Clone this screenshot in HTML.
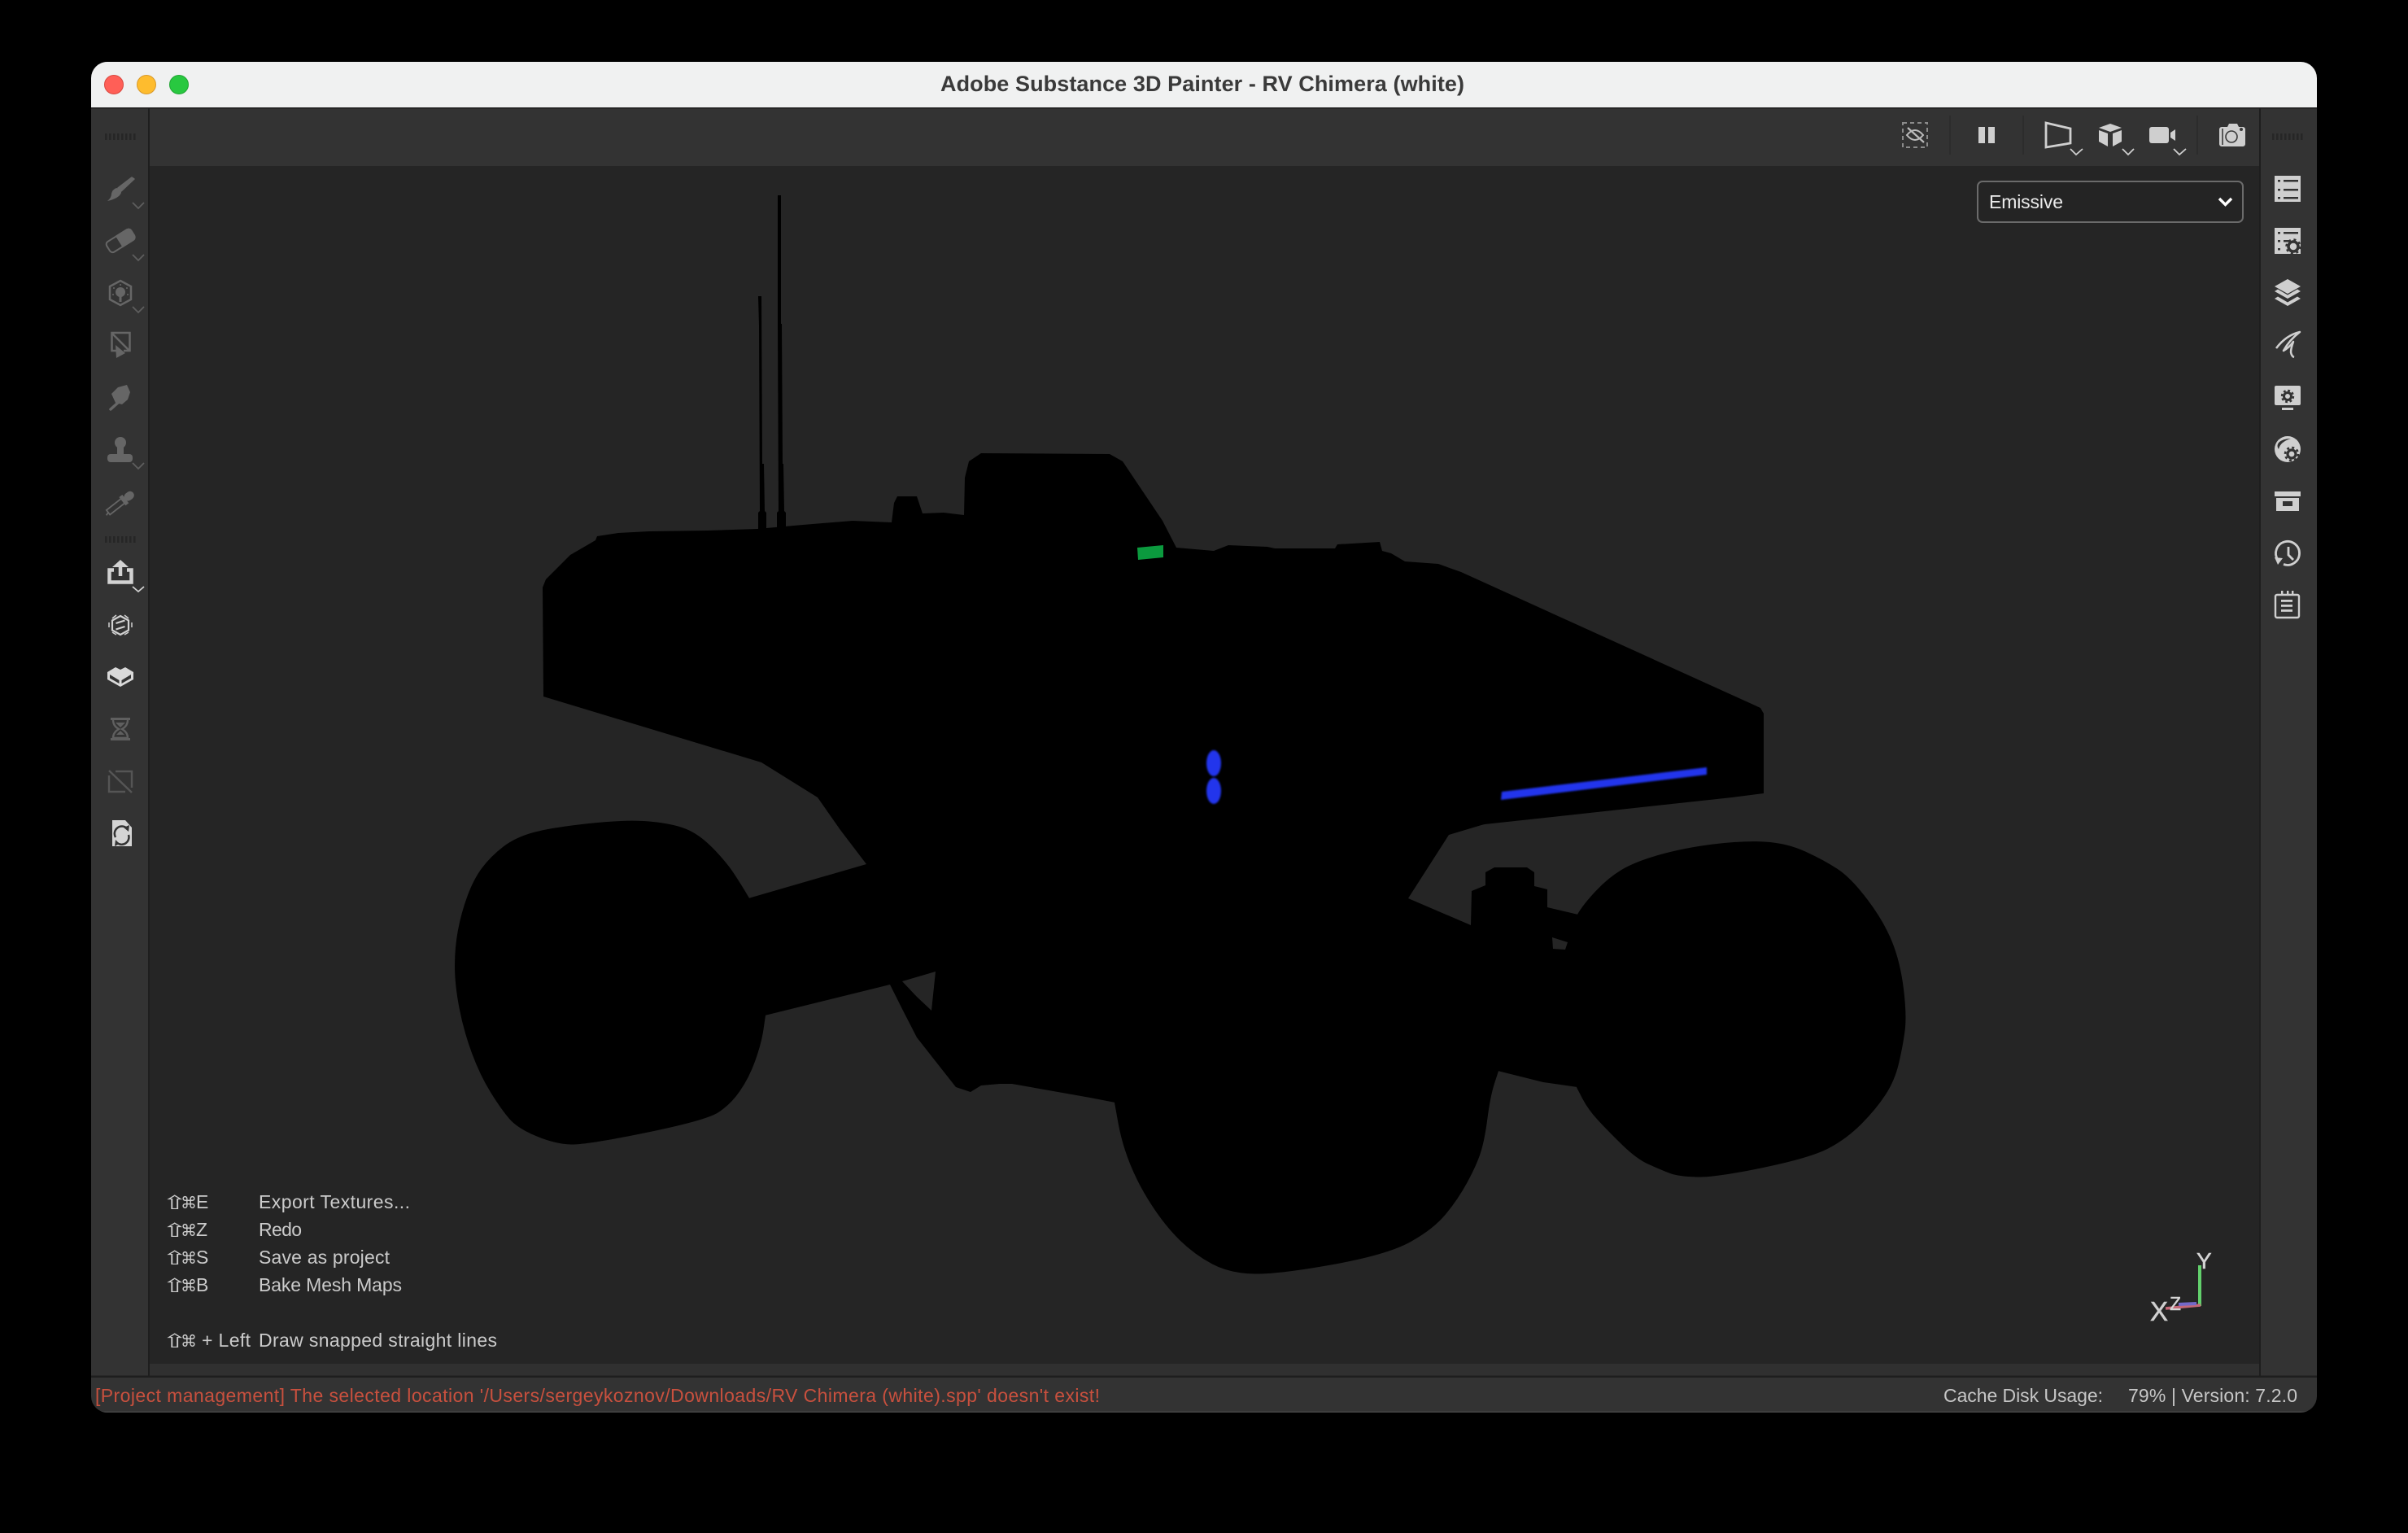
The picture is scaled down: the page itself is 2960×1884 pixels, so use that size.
<!DOCTYPE html>
<html lang="en"><head><meta charset="utf-8"><title>Adobe Substance 3D Painter - RV Chimera (white)</title>
<style>
html,body{margin:0;padding:0;width:2960px;height:1884px;background:#000;overflow:hidden}
svg{display:block;position:absolute;left:0;top:0}
text{font-family:"Liberation Sans","DejaVu Sans",sans-serif}
</style></head><body>
<svg width="2960" height="1884" viewBox="0 0 2960 1884" xmlns="http://www.w3.org/2000/svg">
<defs>
<clipPath id="win"><path d="M132 76H2828A20 20 0 0 1 2848 96V1716A20 20 0 0 1 2828 1736H132A20 20 0 0 1 112 1716V96A20 20 0 0 1 132 76Z"/></clipPath>
<filter id="soft" x="-20%" y="-60%" width="140%" height="220%"><feGaussianBlur stdDeviation="1.1"/></filter>
</defs>
<rect width="2960" height="1884" fill="#000"/>
<g clip-path="url(#win)">
<rect x="112" y="76" width="2736" height="1660" fill="#333"/>
<rect x="112" y="76" width="2736" height="56" fill="#f0f1f1"/>
<rect x="112" y="132" width="2736" height="1.500" fill="#1c1c1c"/>
<rect x="184" y="204" width="2593" height="1472" fill="#252525"/>
<rect x="184" y="1676" width="2593" height="15" fill="#303030"/>
<rect x="182" y="133" width="2" height="1558" fill="#1e1e1e"/>
<rect x="2777" y="133" width="2" height="1558" fill="#1e1e1e"/>
<rect x="112" y="1690.500" width="2736" height="2.500" fill="#1e1e1e"/>
<rect x="112" y="1734.500" width="2736" height="1.500" fill="#454545"/>
</g>
<circle cx="140" cy="104" r="11.5" fill="#ff5f57" stroke="#d9473f" stroke-width="1"/>
<circle cx="180" cy="104" r="11.5" fill="#febc2e" stroke="#d8992a" stroke-width="1"/>
<circle cx="220" cy="104" r="11.5" fill="#28c840" stroke="#21a534" stroke-width="1"/>
<text x="1156" y="112" font-size="27" font-weight="700" fill="#3a3a3a" textLength="644" lengthAdjust="spacing">Adobe Substance 3D Painter - RV Chimera (white)</text>

<!-- Vehicle silhouette -->
<path fill="#000" d="M667 722L671 712L701 682L732 664L734 659L760 655L798 653L870 652L931 650L987 645L1048 640L1096 642L1099 618L1103 610L1127 610L1134 631L1160 630L1185 633L1186 587L1191 567L1206 557L1364 558L1380 567L1429 640L1446 673L1492 677L1510 670L1558 672L1567 674L1641 674L1644 669L1696 666L1699 677L1710 680L1727 690L1768 693L1796 703L2164 870L2168 877L2168 975L2129 980L1825 1013L1821 1014L1781 1026L1731 1104L1808 1137L1809 1095L1826 1088L1826 1072L1837 1066L1877 1066L1886 1072L1886 1089L1902 1093L1902 1115L1940 1124L1939 1336L1897 1330L1841 1316L1371 1355L1340 1349L1244 1332L1229 1332L1206 1334L1193 1342L1175 1336L1127 1275L1109 1240L1094 1210L940 1248L920 1104L1065 1062L1033 1020L1005 980L936 937L668 856Z"/>
<g fill="#000" stroke="#000" stroke-width="2" stroke-linejoin="round">
<path d="M920 1104Q910 1087 901 1073.500Q892 1060 875.500 1043Q859 1026 842.500 1019.500Q826 1013 798 1010.500Q770 1008 724 1013Q678 1018 656 1024Q634 1030 619 1041.500Q604 1053 593.500 1067Q583 1081 575.500 1101.500Q568 1122 564 1143Q560 1164 560 1187Q560 1210 565.500 1238.500Q571 1267 581 1294Q591 1321 604 1342Q617 1363 627 1374.500Q637 1386 660 1395.500Q683 1405 702 1405.500Q721 1406 794 1391Q867 1376 882 1366.500Q897 1357 908.500 1340.500Q920 1324 927.500 1303Q935 1282 937.500 1265L940 1248Z"/>
<path d="M1940 1124Q1947 1112 1962 1096Q1977 1080 1993.500 1070Q2010 1060 2040 1051.500Q2070 1043 2106 1038.500Q2142 1034 2169 1035.500Q2196 1037 2219 1047.500Q2242 1058 2258.500 1069Q2275 1080 2295 1106.500Q2315 1133 2325 1158Q2335 1183 2339 1215.500Q2343 1248 2340.500 1267Q2338 1286 2333 1307Q2328 1328 2316.500 1345.500Q2305 1363 2287 1381Q2269 1399 2247 1410.500Q2225 1422 2167 1434Q2109 1446 2086 1445.500Q2063 1445 2053 1441Q2043 1437 2028 1430.500Q2013 1424 1995 1406.500Q1977 1389 1965 1376Q1953 1363 1946 1349.500L1939 1336Z"/>
<path d="M1841 1316L1836 1331.500Q1831 1347 1827.500 1374Q1824 1401 1819 1416.500Q1814 1432 1802.500 1453Q1791 1474 1776 1492Q1761 1510 1733 1525.500Q1705 1541 1638.500 1553Q1572 1565 1542 1564.500Q1512 1564 1490.500 1552.500Q1469 1541 1451 1523.500Q1433 1506 1416.500 1480.500Q1400 1455 1390 1430Q1380 1405 1375.500 1380L1371 1355Z"/>
</g>
<path fill="#252525" d="M1109 1206L1150 1194L1145 1242L1127 1225Z"/>
<path fill="#252525" d="M1908 1152L1927 1158L1924 1167L1909 1166Z"/>
<path fill="#000" d="M956 240H960V398H961L962 570H963L964 628L966 630V652H955V630L957 628L956 400Z"/>
<path fill="#000" d="M932 364H936L937 570H939L940 628L942 630V652H932V630L934 628L933 400Z"/>
<path fill="#0b9a3e" d="M1398 673L1430 670L1430 685L1399 688Z"/>
<g fill="#2236ec" filter="url(#soft)">
<ellipse cx="1492" cy="938" rx="9" ry="16"/>
<ellipse cx="1492" cy="972" rx="9" ry="16"/>
<path d="M1846 973L2098 943L2098 952L1845 983Z"/>
</g>

<!-- Handles -->
<g stroke="#262626" stroke-width="8" stroke-dasharray="2.5 2.5" fill="none">
<path d="M129 168H169"/><path d="M129 663H169"/><path d="M2793 168H2833"/>
</g>

<!-- Left tools, disabled -->
<g fill="#666" stroke="none">
<path d="M162 218L165 220L149 235L145 231Z" stroke="#666" stroke-width="1.500" stroke-linejoin="round"/>
<path d="M143 231Q149 232 149 237Q146 244 132 247Q137 243 137 238Q138 233 143 231Z"/>
</g>
<g transform="translate(148,296) rotate(-32)">
<rect x="-17.500" y="-7.500" width="35" height="15" rx="4" fill="none" stroke="#666" stroke-width="2"/>
<path d="M-2 -8.500H14A5 5 0 0 1 19 -3.500V3.500A5 5 0 0 1 14 8.500H-2Z" fill="#666"/>
</g>
<path d="M148 345L161 352V368L148 375L135 368V352Z" fill="none" stroke="#666" stroke-width="2.500"/>
<g fill="#666"><circle cx="148" cy="359" r="6"/><rect x="146.500" y="360" width="3" height="11"/><circle cx="140" cy="354" r="1"/><circle cx="156" cy="354" r="1"/><circle cx="148" cy="350" r="1"/><circle cx="139" cy="362" r="1"/><circle cx="157" cy="362" r="1"/></g>
<g fill="none" stroke="#666" stroke-width="2.500">
<path d="M146 431H137.500V409H159.500V431H152"/><path d="M138 410L159 431"/>
</g>
<path d="M142 424L154 434L143 440Z" fill="#666"/>
<path d="M145 476L156 473L160 482L157 491L150 497L142 495L137 484Z" fill="#666"/>
<path d="M146 494L136 503" stroke="#666" stroke-width="3.500" stroke-linecap="round"/>
<g fill="#666"><circle cx="148" cy="544" r="7"/><rect x="144" y="546" width="8" height="14"/><rect x="132" y="558" width="31" height="10" rx="4"/></g>
<g transform="translate(148,618) rotate(-38)">
<rect x="-19" y="-3.500" width="23" height="7" fill="none" stroke="#666" stroke-width="1.800"/>
<path d="M-19 0L-23 1.500" stroke="#666" stroke-width="1.800"/>
<rect x="3" y="-6.500" width="5" height="13" fill="#666"/>
<rect x="7" y="-5" width="13" height="10" rx="5" fill="#666"/>
</g>
<g fill="none" stroke="#5e5e5e" stroke-width="1.800">
<path d="M163 249L170 256L177 249"/><path d="M163 313L170 320L177 313"/><path d="M163 377L170 384L177 377"/><path d="M163 569L170 576L177 569"/>
</g>

<!-- Left tools, active -->
<g fill="none" stroke="#d2d2d2" stroke-width="4.500">
<path d="M140 700.500H134.500V715.500H161.500V700.500H156"/><path d="M148 708V695"/>
</g>
<path d="M148 688L158 697H138Z" fill="#d2d2d2"/>
<path d="M163 721L170 727L177 721" fill="none" stroke="#d2d2d2" stroke-width="1.800"/>
<path d="M148 757L158 762.500V774.500L148 780L138 774.500V762.500Z" fill="none" stroke="#d2d2d2" stroke-width="2.200"/>
<g fill="none" stroke="#d2d2d2" stroke-width="1.500">
<path d="M138 760L143 756M153 756L158 760M134 765V771M162 765V771M138 777L143 780M153 780L158 777"/>
</g>
<path d="M142.500 766L153.500 762.500M142.500 773.500L153.500 770" stroke="#d2d2d2" stroke-width="2.200"/>
<path d="M132 826L142 820L148 823L154 820L164 826V835L148 844L132 835Z" fill="#d9d9d9"/>
<path d="M135 829L146.500 836V840L135 833.500Z" fill="#333"/>
<path d="M161 829L149.500 836V840L161 833.500Z" fill="#333"/>
<g fill="#5f5f5f"><rect x="136" y="882" width="24" height="3"/><rect x="136" y="907" width="24" height="3"/></g>
<path d="M139 885Q139 892 146 896Q139 900 139 907H157Q157 900 150 896Q157 892 157 885" fill="none" stroke="#5f5f5f" stroke-width="2.400"/>
<path d="M142 888H154L148 894Z" fill="#5f5f5f"/>
<path d="M143 903H153L148 898Z" fill="#5f5f5f"/>
<g fill="none" stroke="#555" stroke-width="2.400">
<path d="M142 948H162V968"/><path d="M154 973H134V953"/><path d="M134 947L162 974"/>
</g>
<path d="M138 1008H154L162 1017V1040H138Z" fill="#d4d4d4"/>
<g fill="none" stroke="#333" stroke-width="2.500">
<path d="M142 1029A9 9 0 0 1 156 1018"/><path d="M158 1026A9 9 0 0 1 144 1036"/>
</g>
<path d="M152 1017L159 1014L158 1022Z" fill="#333"/><path d="M147 1037L141 1040L142 1032Z" fill="#333"/>

<!-- Top toolbar -->
<rect x="2339" y="151" width="30" height="30" fill="none" stroke="#8b8b8b" stroke-width="2" stroke-dasharray="5 4"/>
<path d="M2344 166Q2354 154 2364 166Q2354 178 2344 166Z" fill="none" stroke="#bbb" stroke-width="2"/>
<path d="M2345 157L2365 175" stroke="#bbb" stroke-width="2.200"/>
<g stroke="#2b2b2b" stroke-width="1.600"><path d="M2397 142V190"/><path d="M2487 142V190"/><path d="M2701 142V190"/></g>
<g fill="#cfcfcf"><rect x="2432" y="156" width="8" height="20"/><rect x="2444" y="156" width="8" height="20"/></g>
<path d="M2515 151L2545 158V176L2515 181Z" fill="none" stroke="#cfcfcf" stroke-width="2.800"/>
<g fill="#cfcfcf">
<path d="M2580 157L2594 152L2608 157L2594 162Z"/>
<path d="M2580 160L2591 164V180L2580 174Z"/>
<path d="M2597 164L2608 160V174L2597 180Z"/>
<rect x="2642" y="156" width="24" height="20" rx="3"/>
<path d="M2668 163L2674 159V173L2668 169Z"/>
<path d="M2738 156L2740 152H2750L2752 156H2757A3 3 0 0 1 2760 159V177A3 3 0 0 1 2757 180H2731A3 3 0 0 1 2728 177V159A3 3 0 0 1 2731 156Z"/>
</g>
<circle cx="2743" cy="168" r="7" fill="none" stroke="#3a3a3a" stroke-width="1.600"/>
<path d="M2732 158V178" stroke="#3a3a3a" stroke-width="1.600"/>
<circle cx="2755" cy="159" r="2" fill="#3a3a3a"/>
<g fill="none" stroke="#cfcfcf" stroke-width="1.800">
<path d="M2545 183L2552 190L2560 183"/><path d="M2609 183L2616 190L2623 183"/><path d="M2672 183L2679 190L2687 183"/>
</g>

<!-- Dropdown -->
<rect x="2431" y="223" width="326" height="50" rx="6" fill="#242424" stroke="#6b6b6b" stroke-width="2"/>
<text x="2445" y="256" font-size="23" fill="#ececec" textLength="91" lengthAdjust="spacing">Emissive</text>
<path d="M2728 244L2735.500 251.500L2743 244" fill="none" stroke="#fff" stroke-width="3.400"/>

<!-- Right panel icons -->
<rect x="2796" y="216" width="32" height="32" fill="#cfcfcf"/>
<g fill="#333"><rect x="2800" y="221" width="3" height="2.500"/><rect x="2807" y="221" width="18" height="2.500"/><rect x="2800" y="232" width="3" height="2.500"/><rect x="2807" y="232" width="18" height="2.500"/><rect x="2800" y="242" width="3" height="2.500"/><rect x="2807" y="242" width="18" height="2.500"/></g>

<rect x="2796" y="280" width="32" height="32" fill="#cfcfcf"/>
<g fill="#333"><rect x="2800" y="285" width="3" height="2.500"/><rect x="2807" y="285" width="18" height="2.500"/><rect x="2800" y="295" width="3" height="2.500"/><rect x="2807" y="295" width="8" height="2.500"/><rect x="2800" y="305" width="3" height="2.500"/></g>
<circle cx="2819" cy="303" r="6" fill="none" stroke="#333" stroke-width="3.500"/>
<circle cx="2819" cy="303" r="8.500" fill="none" stroke="#333" stroke-width="2.500" stroke-dasharray="3 3.700"/>

<g fill="#cfcfcf">
<path d="M2812 343L2828 352L2812 361L2796 352Z"/>
<path d="M2796 358L2800 355.500L2812 362.500L2824 355.500L2828 358L2812 367Z"/>
<path d="M2796 367L2800 364.500L2812 371.500L2824 364.500L2828 367L2812 376Z"/>
</g>

<path d="M2798 428Q2810 412 2827 408Q2814 418 2807 431Q2814 427 2819 420Q2816 428 2816 433Q2817 438 2820 439" fill="none" stroke="#cfcfcf" stroke-width="2.500" stroke-linejoin="round"/>

<rect x="2796" y="474" width="32" height="24" rx="2" fill="#cfcfcf"/>
<rect x="2805" y="501" width="14" height="3" fill="#cfcfcf"/>
<circle cx="2812" cy="487" r="4.500" fill="none" stroke="#333" stroke-width="3"/>
<circle cx="2812" cy="487" r="7" fill="none" stroke="#333" stroke-width="2.400" stroke-dasharray="2.800 2.700"/>

<circle cx="2812" cy="552" r="16" fill="#cfcfcf"/>
<path d="M2801 552Q2803 543 2816 539Q2806 539 2801 544Q2798 548 2801 552Z" fill="#333"/>
<circle cx="2817" cy="558" r="5" fill="none" stroke="#333" stroke-width="3.200"/>
<circle cx="2817" cy="558" r="8" fill="none" stroke="#333" stroke-width="2.600" stroke-dasharray="3 3.280"/>

<rect x="2796" y="604" width="32" height="6" fill="#cfcfcf"/>
<path d="M2798 612H2826V628H2798ZM2806 616V622H2818V616Z" fill="#cfcfcf" fill-rule="evenodd"/>

<g fill="none" stroke="#cfcfcf" stroke-width="2.800">
<path d="M2800 688A14.500 14.500 0 1 1 2807 693.500"/>
<path d="M2813 672V682L2819 688"/>
</g>
<path d="M2796 685L2806 686L2800 694Z" fill="#cfcfcf"/>

<rect x="2797" y="731" width="29" height="28" rx="2" fill="none" stroke="#cfcfcf" stroke-width="2.400"/>
<g fill="#cfcfcf"><rect x="2804" y="737" width="14" height="2.800"/><rect x="2804" y="743" width="14" height="2.800"/><rect x="2804" y="749" width="14" height="2.800"/><rect x="2804" y="726" width="2.400" height="5"/><rect x="2811" y="726" width="2.400" height="5"/><rect x="2817" y="726" width="2.400" height="5"/></g>

<!-- Shortcuts -->
<g font-size="23" fill="#cbcbcb">
<text transform="translate(199,1486) scale(1.45,0.9)" font-size="26">⇧</text><text x="222" y="1485" font-size="20">⌘</text><text x="241" y="1485">E</text>
<text transform="translate(199,1520) scale(1.45,0.9)" font-size="26">⇧</text><text x="222" y="1519" font-size="20">⌘</text><text x="241" y="1519">Z</text>
<text transform="translate(199,1554) scale(1.45,0.9)" font-size="26">⇧</text><text x="222" y="1553" font-size="20">⌘</text><text x="241" y="1553">S</text>
<text transform="translate(199,1588) scale(1.45,0.9)" font-size="26">⇧</text><text x="222" y="1587" font-size="20">⌘</text><text x="241" y="1587">B</text>
<text transform="translate(199,1656) scale(1.45,0.9)" font-size="26">⇧</text><text x="222" y="1655" font-size="20">⌘</text><text x="248" y="1655" textLength="60" lengthAdjust="spacing">+ Left</text>
<text x="318" y="1485" textLength="186" lengthAdjust="spacing">Export Textures...</text>
<text x="318" y="1519" textLength="53" lengthAdjust="spacing">Redo</text>
<text x="318" y="1553" textLength="161" lengthAdjust="spacing">Save as project</text>
<text x="318" y="1587" textLength="176" lengthAdjust="spacing">Bake Mesh Maps</text>
<text x="318" y="1655" textLength="293" lengthAdjust="spacing">Draw snapped straight lines</text>
</g>

<!-- Status bar -->
<text x="117" y="1723" font-size="23" fill="#c8503e" textLength="1235" lengthAdjust="spacing">[Project management] The selected location '/Users/sergeykoznov/Downloads/RV Chimera (white).spp' doesn't exist!</text>
<text x="2389" y="1723" font-size="23" fill="#c6c6c6" textLength="196" lengthAdjust="spacing">Cache Disk Usage:</text>
<text x="2616" y="1723" font-size="23" fill="#c6c6c6" textLength="208" lengthAdjust="spacing">79% | Version: 7.2.0</text>

<!-- Axis gizmo -->
<rect x="2702" y="1555" width="4" height="50" fill="#62d06c"/>
<path d="M2662 1608L2705 1604" stroke="#c56877" stroke-width="3.500"/>
<path d="M2678 1603L2700 1602" stroke="#7469c8" stroke-width="4"/>
<text x="2643" y="1623" font-size="33" fill="#cfcfcf" stroke="#cfcfcf" stroke-width="0.600">X</text>
<text x="2667" y="1610" font-size="23" fill="#d5d5d5" stroke="#d5d5d5" stroke-width="0.400">Z</text>
<text x="2700" y="1559" font-size="28" fill="#d5d5d5" stroke="#d5d5d5" stroke-width="0.500">Y</text>
</svg>
</body></html>
